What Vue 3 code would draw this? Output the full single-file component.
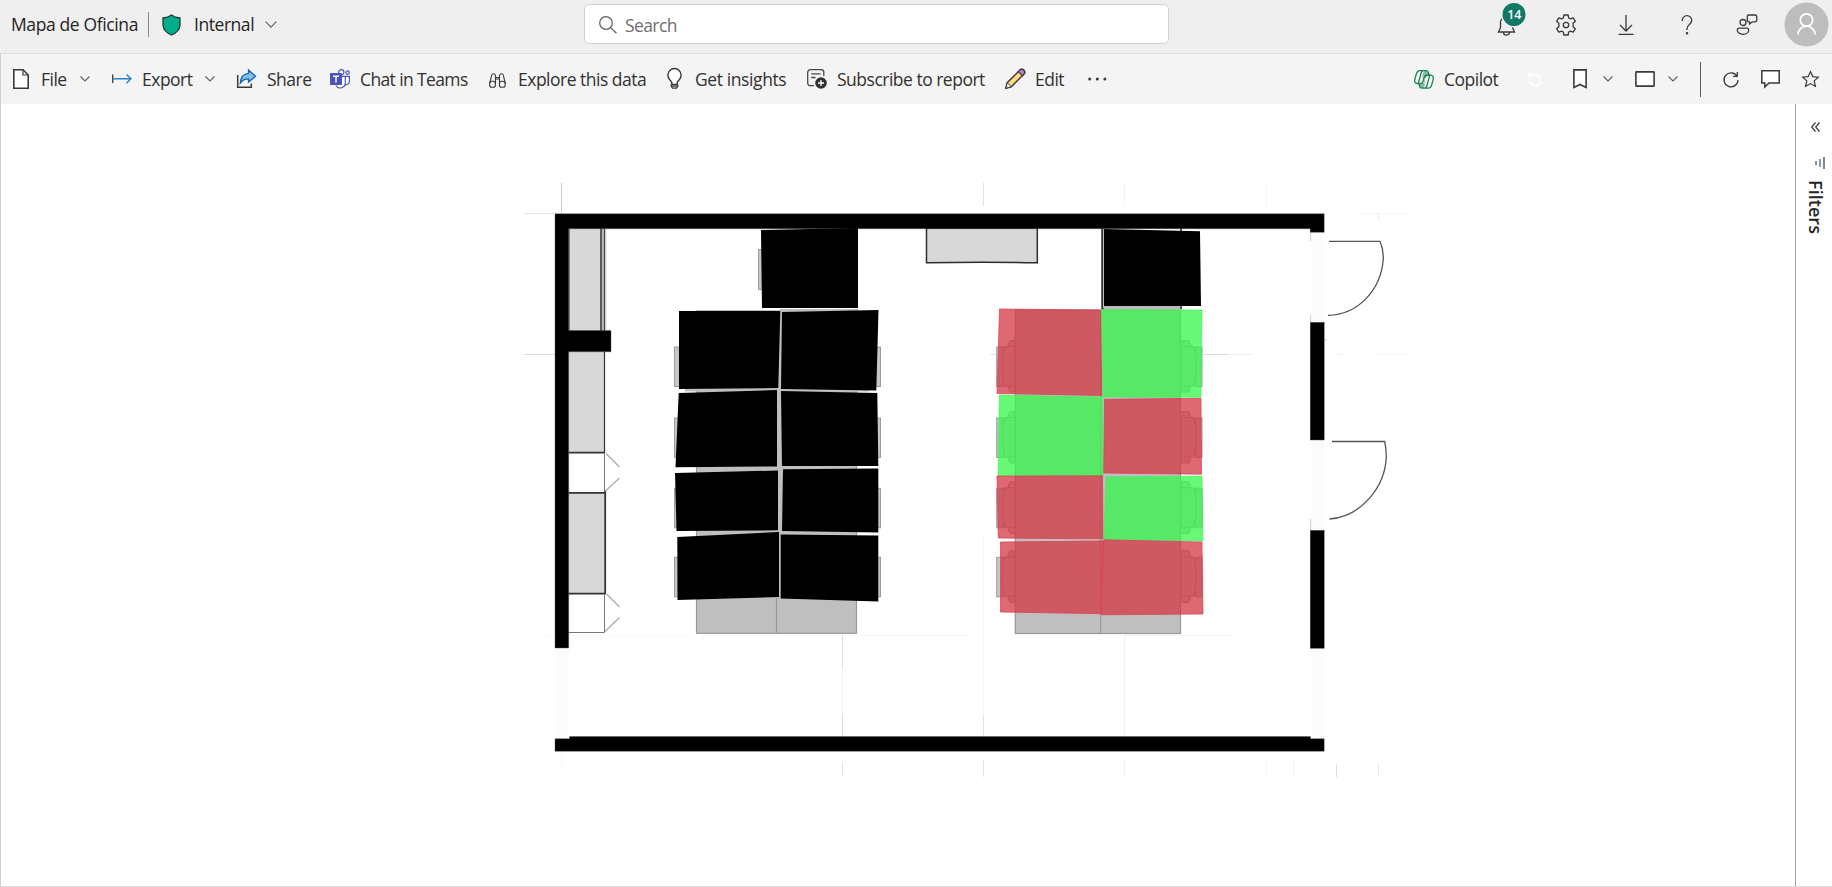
<script setup>
const blackDesks = [
  '761,230 858,228 858,308 762,308',
  '679,311 780.3,311 778.3,388 679,389',
  '782,312 878.5,310 876.3,390.5 781,389',
  '678.7,393 777,390 777,466.5 675.5,467.3',
  '781,391 877.3,393 878.3,466 782,466',
  '675,473 778,470.5 778,530.3 676.5,531',
  '783,469.3 878.3,468.5 878.3,532.5 782,531',
  '677.3,537 779,532 779,597 677.5,600',
  '780.7,534.5 878.3,535.5 878.3,601.5 780.7,598.5',
]
const seats = [
  { state: 'busy', points: '999.5,309 1101,310 1101.7,395.5 997,393.5' },
  { state: 'free', points: '1101.3,309.5 1202,310 1201,397.3 1103,397' },
  { state: 'free', points: '999.3,395 1102.5,397 1103,475.8 998,475.8' },
  { state: 'busy', points: '1104.5,399.3 1201,398.3 1201.5,474.2 1103.7,473' },
  { state: 'busy', points: '997,476 1102.5,475.8 1103,538.8 998.3,538' },
  { state: 'free', points: '1106,477 1202,476 1203,541 1103.7,539.3' },
  { state: 'busy', points: '1000.5,542 1103.5,541 1101,613.7 1000.5,612' },
  { state: 'busy', points: '1103.7,539.8 1202,542 1203,614 1101.5,614.8' },
]
const chairRows = [340, 411, 481.3, 550.3]
const guides = [
  [561.5, 183, 561.5, 213, 0.2], [524, 213.5, 555, 213.5, 0.1], [524, 354.5, 555, 354.5, 0.14],
  [983.5, 183, 983.5, 206, 0.12], [1124.5, 183, 1124.5, 202, 0.06], [1266.5, 183, 1266.5, 208, 0.03],
  [990, 354.5, 997, 354.5, 0.1], [1203, 354.5, 1228, 354.5, 0.14], [1228, 354.5, 1253, 354.5, 0.06], [1324, 339.5, 1327, 339.5, 0.15],
  [1337, 354.5, 1343, 354.5, 0.07], [1377, 354.5, 1407, 354.5, 0.03], [1360, 213.5, 1407, 213.5, 0.03],
  [1378.5, 213, 1378.5, 220, 0.08], [842.5, 635, 842.5, 668, 0.12], [842.5, 668, 842.5, 716, 0.05],
  [842.5, 716, 842.5, 736, 0.14], [842.5, 762, 842.5, 777, 0.1], [541, 635.5, 696, 635.5, 0.02],
  [860, 635.5, 970, 635.5, 0.05], [1124, 635.5, 1230, 635.5, 0.05], [983.5, 537, 983.5, 716, 0.03],
  [983.5, 716, 983.5, 736, 0.12], [983.5, 760, 983.5, 777, 0.1], [1124.5, 635, 1124.5, 736, 0.06],
  [1124.5, 760, 1124.5, 777, 0.05], [702.5, 635, 702.5, 640, 0.06], [561.5, 752, 561.5, 765, 0.03],
  [1266.5, 760, 1266.5, 777, 0.03], [1293.5, 760, 1293.5, 777, 0.05], [1336.5, 764, 1336.5, 777, 0.13],
  [1378.5, 764, 1378.5, 777, 0.09], [1310.7, 228, 1310.7, 241, 0.2], [1310.7, 315, 1310.7, 322, 0.2],
  [1310.7, 519, 1310.7, 530, 0.2],
]
const specks = [
  [533, 494], [617, 494], [659, 494], [885, 494], [913, 494], [927, 494], [955, 494], [970, 494],
  [701.5, 241], [701.5, 269], [701.5, 283], [701.5, 763], [1350, 762], [1365, 762],
]
</script>

<template>
  <div class="app">
    <header class="topbar">
      <div class="brand">
        <span class="title">Mapa de Oficina</span>
        <i class="brand-rule"></i>
        <svg class="shield" viewBox="0 0 19 22"><path d="M9.500.9Q12.700 3.400 18 3.800V11.500Q17.300 17.800 9.500 21 1.700 17.800 1 11.500V3.800Q6.300 3.400 9.500.9Z" fill="#00ae8c" stroke="#1f3b36" stroke-width="1.300" /></svg>
        <span class="level">Internal</span>
        <svg class="chev big" viewBox="0 0 12 7"><path d="M.6.7 6 6.100 11.400.7" /></svg>
      </div>
      <div class="search">
        <svg class="glass" viewBox="0 0 18 18"><circle cx="7" cy="7" r="6.300" /><path d="M11.600 11.600 17.500 17.300" /></svg>
        <span class="placeholder">Search</span>
      </div>
      <div class="tools">
        <svg class="tool bell" viewBox="0 0 28 34"><path d="M1.500 27H17.500L15.500 22.500V16.500A6.200 6.200 0 0 0 3.500 16.500V22.500ZM6.500 27.500A3 2.600 0 0 0 12.500 27.500" /><circle cx="17" cy="9.500" r="13" class="badge-ring" /><circle cx="17" cy="9.500" r="11.500" class="badge-fill" /><text x="17.300" y="14.300" text-anchor="middle" class="badge-text">14</text></svg>
        <svg class="tool gear" viewBox="0 0 22 22"><path d="M8.900 1h4.200l.6 3 1.600.8 2.900-1 2.200 3.500-2.300 2v3.400l2.300 2-2.200 3.500-2.900-1-1.600.8-.6 3H8.900l-.6-3-1.600-.8-2.900 1-2.200-3.500 2.300-2V9.300l-2.300-2 2.200-3.500 2.900 1L8.300 4Z" stroke-linejoin="round" /><circle cx="11" cy="11" r="2.700" /></svg>
        <svg class="tool download" viewBox="0 0 16 20"><path d="M8 0V16M2 10 8 16 14 10M.5 19.300H15.500" /></svg>
        <svg class="tool help" viewBox="0 0 12 20"><path d="M1.200 6V5.500A4.800 4.800 0 0 1 10.800 5.500C10.800 9 6 9.500 6 13.800V15" /><circle cx="6" cy="18.300" r=".6" class="dot" /></svg>
        <svg class="tool feedback" viewBox="0 0 22 21"><circle cx="7" cy="8.500" r="3" /><path d="M3 14.200H11A1.700 1.700 0 0 1 12.700 16C12.700 18.500 10.200 20.300 7 20.300S1.300 18.500 1.300 16A1.700 1.700 0 0 1 3 14.200ZM12.500 1H19A1.800 1.800 0 0 1 20.800 2.800V6A1.800 1.800 0 0 1 19 7.800H16.500L13.600 10V7.800H12.500A1.300 1.300 0 0 1 11.300 6.500V2.300A1.300 1.300 0 0 1 12.500 1Z" /></svg>
        <svg class="avatar" viewBox="0 0 45 45"><circle cx="22.500" cy="22.500" r="22" fill="#bdbdbd" /><circle cx="22.500" cy="18" r="6.200" /><path d="M14 32.500A8.500 8.300 0 0 1 31 32.500" /></svg>
      </div>
    </header>

    <nav class="toolbar">
      <div class="item file">
        <svg width="16" height="20" viewBox="0 0 16 20"><path d="M.8.8H10L15.200 6V19.200H.8Z" fill="#fff" stroke="#3b3a39" stroke-width="1.600" /><path d="M10 .8V6H15.200" fill="none" stroke="#3b3a39" stroke-width="1.200" /></svg>
        <span>File</span>
        <svg class="chev" viewBox="0 0 10 6"><path d="M.5.5 5 5 9.500.5" /></svg>
      </div>
      <div class="item export">
        <svg width="20" height="10" viewBox="0 0 20 10"><path d="M.7.500V9" stroke="#3b3a39" stroke-width="1.300" fill="none" /><path d="M1.300 4.800H19M14.500.5 19 4.800 14.500 9.300" stroke="#2382c4" stroke-width="1.400" fill="none" /></svg>
        <span>Export</span>
        <svg class="chev" viewBox="0 0 10 6"><path d="M.5.5 5 5 9.500.5" /></svg>
      </div>
      <div class="item share">
        <svg width="21" height="20" viewBox="0 0 21 20"><path d="M1.700 6V18.300H15.300V14.500" fill="none" stroke="#3b3a39" stroke-width="1.500" /><path d="M12.500 1 19.500 7.200 12.500 13V9.800Q7.500 9.600 4.300 14 5 5 12.500 4.300Z" fill="#83beec" stroke="#1066ae" stroke-width="1.300" /></svg>
        <span>Share</span>
      </div>
      <div class="item teams">
        <svg width="20" height="20" viewBox="0 0 20 20"><circle cx="11.300" cy="3.300" r="2.600" fill="#fff" stroke="#4b53bc" stroke-width="1.200" /><circle cx="17.600" cy="3.600" r="1.700" fill="#fff" stroke="#4b53bc" stroke-width="1.200" /><path d="M15.500 7.300H19.400V12.500A3.500 3.500 0 0 1 15 15.500M7 7.300H15.300V14A5 5 0 0 1 6 16.500" fill="#fff" stroke="#4b53bc" stroke-width="1.200" /><rect y="4" width="12" height="12" rx=".8" fill="#4b53bc" /><path d="M3 7.300H9M6 7.300V13.500" stroke="#fff" stroke-width="1.500" /></svg>
        <span>Chat in Teams</span>
      </div>
      <div class="item explore">
        <svg width="17" height="15" viewBox="0 0 17 15"><g fill="none" stroke="#3b3a39" stroke-width="1.100"><rect x=".6" y="8.300" width="5.800" height="5.900" rx="2.300" /><rect x="10.400" y="8.300" width="5.800" height="5.900" rx="2.300" /><path d="M.7 10.500 2.700 2.200Q3 .7 4.500.7T6.500 2.300V11M16.300 10.500 14.300 2.200Q14 .7 12.500.7T10.500 2.300V11M6.500 4.500H10.500M6.500 6H10.500" /></g></svg>
        <span>Explore this data</span>
      </div>
      <div class="item insights">
        <svg width="15" height="20" viewBox="0 0 15 20"><path d="M4.800 15.500V13.500Q4.500 12.500 2.700 10.700A6.600 6.600 0 1 1 12.300 10.700Q10.500 12.500 10.200 13.500V15.500Z" fill="#fff" stroke="#3b3a39" stroke-width="1.400" /><path d="M4.200 15.300V17.300L5.500 19.200H9.500L10.800 17.300V15.300M4.500 17.200H10.500" fill="none" stroke="#3b3a39" stroke-width="1.200" /></svg>
        <span>Get insights</span>
      </div>
      <div class="item subscribe">
        <svg width="20" height="20" viewBox="0 0 20 20"><path d="M7 16.700H3.300A2.600 2.600 0 0 1 .7 14.100V3.300A2.600 2.600 0 0 1 3.300.7H14.200A2.600 2.600 0 0 1 16.800 3.300V7M4.200 4.800H13.500M4.200 8.500H8.500" fill="none" stroke="#4a4847" stroke-width="1.300" /><circle cx="14" cy="14" r="5.800" fill="#323130" /><path d="M14 11V17M11 14H17" stroke="#fff" stroke-width="1.300" /></svg>
        <span>Subscribe to report</span>
      </div>
      <div class="item edit">
        <svg width="20" height="20" viewBox="0 0 20 20"><path d="M.8 19.200 2.200 13.700 14.700 1.200A2.500 2.500 0 0 1 18.800 5.300L6.300 17.800Z" fill="#ffd983" stroke="#3b3a39" stroke-width="1.400" /><path d="M.8 19.200 2.200 13.700 6.300 17.800Z" fill="#fff" stroke="#3b3a39" /><path d="M13.300 2.600 14.700 1.200A2.500 2.500 0 0 1 18.800 5.300L17.400 6.700Z" fill="#c080c8" stroke="#3b3a39" stroke-width="1.200" /></svg>
        <span>Edit</span>
      </div>
      <svg class="more" width="19" height="4" viewBox="0 0 19 4"><circle cx="1.700" cy="2" r="1.500" /><circle cx="9.300" cy="2" r="1.500" /><circle cx="16.900" cy="2" r="1.500" /></svg>

      <div class="right">
        <div class="item copilot">
          <svg width="20" height="19" viewBox="0 0 20 19"><path d="M10 .8H12.500Q14.300 1 14.700 3L15 5.200H12.500Q11 5.200 10.300 7L9 11 8.500 5ZM10.300 18H7.500Q5.700 17.800 5.300 16L5 13.600H7.500Q9 13.600 9.700 12L11 8Z" fill="#1b8453" opacity=".5" /><g fill="none" stroke="#1b8453" stroke-width="1.300" stroke-linejoin="round"><path d="M5.500.7H12.200Q14 .9 14.500 2.800L15 5.200H12.700Q11 5.200 10.400 7L9 11.300Q8.300 13.600 6.300 13.600H3.500Q-.1 13.300.8 9.500L2.300 4Q3.200.7 5.500.7Z" /><path d="M14.500 18.100H7.800Q6 17.900 5.500 16L5 13.600M11 7.500Q11.700 5.200 13.700 5.200H16.500Q20.100 5.500 19.200 9.300L17.700 14.800Q16.800 18.100 14.500 18.100M8.800.7Q7.600 1.200 7 3.500L4.300 13.500M11.200 18.100Q12.400 17.600 13 15.300L15.700 5.300" /></g></svg>
          <span>Copilot</span>
        </div>
        <svg class="undo" viewBox="0 0 16 16"><path d="M4.500.5 1 4 4.500 7.500M1 4H8.500A5.500 5.500 0 1 1 3 10" /></svg>
        <svg class="bookmark" viewBox="0 0 14 20"><path d="M.9.9H13.100V18.500L7 15.500.9 18.500Z" /></svg>
        <svg class="chev c1" viewBox="0 0 10 6"><path d="M.5.5 5 5 9.500.5" /></svg>
        <svg class="view" viewBox="0 0 20 16"><rect x=".9" y=".9" width="18.200" height="14.200" rx=".5" /></svg>
        <svg class="chev c2" viewBox="0 0 10 6"><path d="M.5.5 5 5 9.500.5" /></svg>
        <i class="tool-rule"></i>
        <svg class="refresh" viewBox="0 0 16 16"><path d="M14.300 1V5.300H10M14 5.200A7 7 0 1 0 15 9" /></svg>
        <svg class="comment" viewBox="0 0 19 18"><path d="M.8.8H18.200V13H8L3.800 17V13H.8Z" /></svg>
        <svg class="star" viewBox="0 0 17 16"><path d="M8.500.6 10.800 5.600 16.300 6.200 12.200 9.900 13.400 15.400 8.500 12.600 3.600 15.400 4.800 9.900.7 6.200 6.200 5.600Z" /></svg>
      </div>
    </nav>

    <main class="workspace">
      <svg class="plan" viewBox="1 104 1794 782">
        <g class="guide">
          <line v-for="(g, i) in guides" :key="i" :x1="g[0]" :y1="g[1]" :x2="g[2]" :y2="g[3]" :stroke-opacity="g[4]" />
          <line v-for="(s, i) in specks" :key="'s' + i" :x1="s[0]" :y1="s[1]" :x2="s[0] + 1" :y2="s[1]" stroke-opacity=".07" stroke-width="1.500" />
        </g>
        <g fill="#fbfbfb">
          <rect x="556" y="648" width="12.500" height="91" />
          <rect x="1312" y="232" width="12" height="90" />
          <rect x="1312" y="440" width="12" height="90" />
          <rect x="1312" y="648" width="12" height="91" />
        </g>

        <g fill="#d8d8d8">
          <rect x="569" y="228" width="31" height="103" />
          <rect x="569" y="352" width="35.500" height="100" />
          <rect x="569" y="493" width="35.500" height="101" />
          <path d="M926.500 228V262.700Q982 261.700 1037.300 262.700V228Z" stroke="#2d2d2d" stroke-width="1.500" />
        </g>
        <rect x="602" y="228" width="2.300" height="103" fill="#b4b4b4" />
        <g fill="none" stroke="#333" stroke-width="1.300">
          <path d="M569 229V331" stroke-width="1" />
          <path d="M601 228V331" stroke-width="1.600" />
          <path d="M604.700 228V331M604.500 352V453" stroke-width="1.200" />
          <path d="M568.500 452.600H604.500M568.500 492.900H605M605.200 491V594M568.500 593.700H605.500" stroke-width="1.800" />
          <path d="M604.500 453V491M604.500 594V632.500M568.500 632.500H604.500" stroke="#777" stroke-width="1" />
          <path d="M606 453.500 619.500 467M619.500 478 605.500 491M606.500 594 619.500 607M619.500 617.500 605 631.500" stroke="#aaa" stroke-width="1.200" />
        </g>
        <path d="M606 228V331" stroke="#ddd" />

        <g class="walls">
          <path d="M555 213.800H1324.200V232.300H1310.200V228.700H568.700V330.500H611V351.800H568.700V648H555Z" />
          <path d="M555 738.700H569.500V736.500H1310.500V738.700H1324.200V751.300H555Z" />
          <rect x="1310.200" y="322.300" width="14" height="117.700" />
          <rect x="1310.200" y="530.300" width="14" height="118" />
        </g>

        <g class="tables">
          <rect x="696.500" y="311" width="160" height="322.300" />
          <path d="M776.500 598V633" />
          <rect x="1015.300" y="310" width="165.200" height="323.500" />
          <path d="M1100.700 310V633" />
        </g>
        <path d="M780 309H858V312H780ZM685 388.500H869V391.500H685ZM777 389H782V533H777Z" fill="#bfbfbf" />
        <g class="chair-backs">
          <rect x="758.500" y="249.500" width="5" height="40" />
          <template v-for="y in chairRows" :key="y">
            <rect x="674.500" :y="y + 7" width="7" height="39.500" />
            <rect x="874" :y="y + 7" width="6.500" height="39.500" />
            <rect x="996.700" :y="y + 7" width="7" height="39.500" />
            <rect x="1195.500" :y="y + 7" width="6.500" height="39.500" />
            <path :transform="`translate(0 ${y})`" d="M1015 .5H1011Q1008.500.5 1008 6.500H1005Q1002.500 13 1002.500 26T1005 46H1008Q1008.500 52 1011 52H1015ZM1008 6.500H1015M1008 46H1015" />
            <path :transform="`translate(2195.700 ${y}) scale(-1 1)`" d="M1015 .5H1007Q1006 .5 1005 6.500H1002Q999.500 13 999.500 26T1002 46H1005Q1006 52 1007 52H1015ZM1005 6.500H1015M1005 46H1015" />
          </template>
        </g>
        <path d="M1102.500 228V309" stroke="#333" stroke-width="2.500" />
        <path d="M1103.500 229V308" stroke="#bbb" />
        <path d="M1104 306H1180V309H1104Z" fill="#bbb" />
        <path d="M1181 228V231M1181 305V309" stroke="#222" stroke-width="1.500" />
        <polygon points="1104,229 1200,231.300 1201,306 1104,306" />
        <polygon v-for="p in blackDesks" :key="p" :points="p" />
        <polygon v-for="s in seats" :key="s.points" :points="s.points" :class="s.state" />

        <g fill="none" stroke="#555" stroke-width="1.300">
          <path d="M1329 241.300H1380Q1383.500 249 1383.300 259C1381 290 1358 315 1328 315.300" />
          <path d="M1332 441.500H1384.700Q1386.300 448 1386.300 457C1385 488 1360 517 1329.500 519" />
        </g>
      </svg>
      <aside class="filters">
        <svg class="collapse" viewBox="0 0 9 10"><path d="M4.500.5.7 5 4.500 9.500M8.500.5 4.700 5 8.500 9.500" /></svg>
        <svg class="filter-icon" viewBox="0 0 10 12"><path d="M1 4V8" stroke="#555" /><path d="M5 2V10" stroke="#2b74a8" /><path d="M9 0V12" stroke="#444" /></svg>
        <span class="filters-label">Filters</span>
      </aside>
    </main>
  </div>
</template>

<style>
body { margin: 0; background: #fff; overflow: hidden; }
</style>

<style scoped>
.app { width: 1832px; height: 887px; display: flex; flex-direction: column; font-family: "Open Sans", "Noto Sans", sans-serif; font-size: 17.500px; color: #323130; box-sizing: border-box; }
svg { display: block; flex: none; overflow: visible; }
span { white-space: nowrap; line-height: 24px; }
.topbar { height: 53px; flex: none; background: #efefef; display: flex; }
.brand { width: 584px; flex: none; display: flex; align-items: center; height: 49px; box-sizing: border-box; padding-left: 11px; }
.title { width: 137px; margin-top: -1px; letter-spacing: -.38px; color: #252423; }
.brand-rule { width: 1px; height: 25px; background: #8a8886; margin-right: 13px; }
.shield { width: 19px; height: 22px; }
.level { margin: -1px 0 0 13px; width: 71px; letter-spacing: -.45px; color: #252423; }
.chev { width: 10px; height: 6px; fill: none; stroke: #605e5c; stroke-width: 1.100; }
.chev.big { width: 12px; height: 7px; }
.search { width: 585px; height: 40px; margin-top: 4px; flex: none; box-sizing: border-box; border: 1px solid #d1d1d1; border-radius: 5px; background: #fff; display: flex; align-items: center; padding-left: 14px; }
.glass { width: 18px; height: 18px; margin-top: 1px; fill: none; stroke: #605e5c; stroke-width: 1.200; }
.placeholder { margin: 1px 0 0 8px; color: #706e6c; letter-spacing: -.6px; }
.tools { display: flex; align-items: center; height: 49px; margin-left: 328px; }
.tool { fill: none; stroke: #3b3a39; stroke-width: 1.300; }
.bell { width: 28px; height: 34px; margin-top: -6px; }
.badge-ring { fill: #efefef; stroke: none; }
.badge-fill { fill: #117865; stroke: none; }
.badge-text { fill: #fff; stroke: none; font-size: 12.500px; font-weight: 600; }
.gear { width: 22px; height: 22px; margin-left: 30px; }
.download { width: 16px; height: 20px; margin-left: 41px; }
.help { width: 12px; height: 20px; margin-left: 47px; }
.dot { fill: #3b3a39; }
.feedback { width: 22px; height: 21px; margin-left: 43px; }
.avatar { width: 45px; height: 45px; margin-left: 26px; fill: none; stroke: #fff; stroke-width: 1.800; }
.avatar circle:first-child { stroke: none; }
.toolbar { height: 51px; flex: none; box-sizing: border-box; border-top: 1px solid #dcdcdc; border-left: 1px solid #d0d0d0; background: #f4f4f4; display: flex; align-items: center; padding-left: 12px; }
.item { display: flex; align-items: center; flex: none; letter-spacing: -.5px; }
.item > svg:first-child { margin-right: 10px; }
.item.file { width: 99px; }
.item.file > svg:first-child { margin-right: 12px; }
.file span { width: 39px; }
.item.export { width: 124px; }
.export span { width: 63px; }
.item.share { width: 94px; }
.item.teams { width: 159px; }
.teams span { letter-spacing: -.62px; }
.item.explore { width: 178px; }
.item.explore > svg:first-child { margin: 3px 12px 0 0; }
.item.insights { width: 140px; }
.item.insights > svg:first-child { margin-right: 13px; }
.insights span { letter-spacing: -.4px; }
.item.subscribe { width: 198px; }
.item.edit { width: 83px; }
.more { fill: #3b3a39; }
.right { display: flex; align-items: center; margin-left: 307px; }
.item.copilot { width: 113px; }
.undo { width: 16px; height: 16px; fill: none; stroke: #fff; stroke-width: 1.300; }
.bookmark { width: 14px; height: 20px; margin-left: 30px; fill: #fff; stroke: #3b3a39; stroke-width: 1.600; }
.c1 { margin-left: 16px; }
.view { width: 20px; height: 16px; margin-left: 22px; fill: #fff; stroke: #3b3a39; stroke-width: 1.600; }
.c2 { margin-left: 13px; }
.tool-rule { width: 1px; height: 35px; margin-left: 22px; background: #5c5b5a; }
.refresh { width: 16px; height: 16px; margin-left: 22px; fill: none; stroke: #3b3a39; stroke-width: 1.300; }
.comment { width: 19px; height: 18px; margin-left: 22px; fill: #fff; stroke: #3b3a39; stroke-width: 1.500; }
.star { width: 17px; height: 16px; margin-left: 22px; fill: none; stroke: #3b3a39; stroke-width: 1.200; }
.workspace { height: 783px; flex: none; box-sizing: border-box; border-left: 1px solid #d0d0d0; border-bottom: 1px solid #dcdcdc; display: flex; background: #fff; }
.plan { width: 1794px; height: 782px; }
.guide { stroke: #000; stroke-width: 1; }
.walls { fill: #000; stroke: #555; stroke-width: .4; }
.tables { fill: #bfbfbf; stroke: #9a9a9a; stroke-width: 1.200; }
.chair-backs { fill: #c6c6c6; stroke: #9c9c9c; stroke-width: 1; }
.busy { fill: #d43743; fill-opacity: .75; stroke: #de3b4b; stroke-opacity: .7; stroke-width: 1; }
.free { fill: #34f54b; fill-opacity: .75; stroke: #40ee58; stroke-opacity: .6; stroke-width: 1; }
.filters { width: 37px; flex: none; box-sizing: border-box; border-left: 1px solid #a6a6a6; display: flex; flex-direction: column; align-items: flex-start; }
.collapse { width: 9px; height: 10px; margin: 18px 0 0 15px; fill: none; stroke: #3b3a39; stroke-width: 1.200; }
.filter-icon { width: 10px; height: 12px; margin: 25px 0 0 19px; stroke-width: 1.300; }
.filters-label { writing-mode: vertical-rl; margin: 11px 0 0 8px; font-size: 18px; font-weight: 600; letter-spacing: .05px; color: #252423; }
</style>
